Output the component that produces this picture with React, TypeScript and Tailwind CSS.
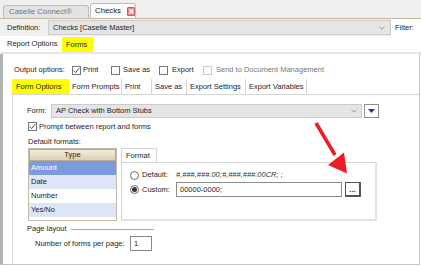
import React from 'react';

function Check({ checked = false, disabled = false }: { checked?: boolean; disabled?: boolean }) {
  return (
    <span
      className={`w-[9px] h-[9px] shrink-0 border bg-white flex items-center justify-center ${
        disabled ? 'border-[#c9c9c9]' : 'border-[#767676]'
      }`}
    >
      {checked && (
        <svg width="7" height="7" viewBox="0 0 7 7">
          <path d="M0.6 3.4 L2.6 5.6 L6.4 0.9" fill="none" stroke="#3a3a3a" strokeWidth="0.9" />
        </svg>
      )}
    </span>
  );
}

function Radio({ checked = false }: { checked?: boolean }) {
  return (
    <span className="w-[9px] h-[9px] shrink-0 rounded-full border border-[#6c6c6c] bg-white flex items-center justify-center">
      {checked && <span className="w-[5px] h-[5px] rounded-full bg-[#333]" />}
    </span>
  );
}

function Chevron() {
  return (
    <svg width="6" height="4" viewBox="0 0 6 4">
      <path d="M0.5 0.8 L3 3.2 L5.5 0.8" fill="none" stroke="#8a8a8a" strokeWidth="0.9" />
    </svg>
  );
}

export default function App() {
  const tabs = [
    { name: 'Form Prompts', w: 'w-[53px]' },
    { name: 'Print', w: 'w-[30px]' },
    { name: 'Save as', w: 'w-[35px]' },
    { name: 'Export Settings', w: 'w-[59px]' },
    { name: 'Export Variables', w: 'w-[61px]' },
  ];

  const rows = [
    { name: 'Amount', cls: 'bg-[#7d9ade] text-white' },
    { name: 'Date', cls: 'bg-[#dde6f6]' },
    { name: 'Number', cls: 'bg-white' },
    { name: 'Yes/No', cls: 'bg-[#dde6f6]' },
  ];

  return (
    <div className="relative w-[421px] h-[266px] overflow-hidden bg-white flex flex-col whitespace-nowrap text-[7.5px] leading-none text-[#1e1e1e] font-['Liberation_Sans',Arial,sans-serif]">
      {/* Document tabs */}
      <div className="h-[19px] shrink-0 flex items-end gap-[1px] pl-[3px] bg-[#efefef] border-b border-[#c7b7a3]">
        <div className="h-[13px] w-[86px] flex items-center pl-[5px] rounded-t-[3px] border border-b-0 border-[#bdbdbd] bg-[#e3e3e3] text-[#777] text-[7.8px]">
          Caselle Connect®
        </div>
        <div className="h-[15px] w-[46px] flex items-center pl-[4px] gap-[6px] rounded-t-[3px] border border-b-0 border-[#bdbdbd] bg-[#fbfbfb] text-[7.8px]">
          <span>Checks</span>
          <span className="w-[9px] h-[9px] rounded-[1px] border border-[#cf5a5a] bg-[#f08a8a] flex items-center justify-center">
            <svg width="5" height="5" viewBox="0 0 5 5">
              <path d="M0.5 0.5 L4.5 4.5 M4.5 0.5 L0.5 4.5" stroke="#fff" strokeWidth="1.2" />
            </svg>
          </span>
        </div>
      </div>

      {/* Definition */}
      <div className="h-[17px] shrink-0 flex items-center bg-[#f0f0f0]">
        <span className="w-[48px] pl-[7px]">Definition:</span>
        <div className="w-[343px] h-[15px] flex items-center justify-between pl-[4px] pr-[5px] border border-[#cbcbcb] bg-[#e5e5e5]">
          <span>Checks [Caselle Master]</span>
          <Chevron />
        </div>
        <div className="flex-1 h-full flex items-center pl-[4px] bg-white">Filter:</div>
      </div>

      {/* Report / Forms */}
      <div className="h-[16px] shrink-0 flex items-end bg-white">
        <span className="w-[62px] pl-[7px] self-center">Report Options</span>
        <div className="h-[15px] w-[31px] flex items-center pl-[4px] bg-[#ffff00]">Forms</div>
      </div>
      <div className="h-[2px] shrink-0 bg-[#e6e6e6]" />

      {/* Main panel */}
      <div className="h-[211px] shrink-0 mr-[1px] flex flex-col bg-white border-l-[3px] border-l-[#b3b3b3] border-r border-r-[#c6c6c6] border-b border-b-[#c6c6c6]">
        {/* Output options */}
        <div className="mt-[10px] h-[12px] flex items-center pl-[11px]">
          <span className="w-[58px]">Output options:</span>
          <div className="w-[39px] flex items-center gap-[2px]">
            <Check checked />
            <span>Print</span>
          </div>
          <div className="w-[48px] flex items-center gap-[3px]">
            <Check />
            <span>Save as</span>
          </div>
          <div className="w-[44px] flex items-center gap-[4px]">
            <Check />
            <span>Export</span>
          </div>
          <div className="flex items-center gap-[4px] text-[#777]">
            <Check disabled />
            <span>Send to Document Management</span>
          </div>
        </div>

        {/* Sub tabs */}
        <div className="mt-[3px] ml-[9px] h-[16px] flex border-b border-[#d6d6d6]">
          <div className="w-[57px] h-[15px] flex items-center pl-[4px] bg-[#ffff00]">Form Options</div>
          {tabs.map((t) => (
            <div key={t.name} className={`${t.w} h-[15px] flex items-center pl-[3px] border-r border-[#d6d6d6]`}>
              {t.name}
            </div>
          ))}
        </div>

        {/* Form Options page */}
        <div className="ml-[9px] flex-1 flex flex-col border-l border-[#dadada]">
          <div className="mt-[9px] h-[14px] flex items-center pl-[14px]">
            <span className="w-[24px]">Form:</span>
            <div className="w-[311px] h-[14px] flex items-center justify-between pl-[4px] pr-[4px] border border-[#cbcbcb] bg-[#e5e5e5]">
              <span>AP Check with Bottom Stubs</span>
              <Chevron />
            </div>
            <div className="ml-[2px] w-[15px] h-[14px] flex flex-col items-center justify-center gap-[1px] border border-[#8e8e8e] bg-white">
              <svg width="7" height="4" viewBox="0 0 7 4">
                <path d="M0 0 L7 0 L3.5 4 Z" fill="#1f3c8a" />
              </svg>
            </div>
          </div>

          <div className="mt-[4px] h-[9px] flex items-center gap-[2px] pl-[15px]">
            <Check checked />
            <span>Prompt between report and forms</span>
          </div>

          <div className="mt-[6px] h-[10px] flex items-center pl-[15px]">Default formats:</div>

          <div className="mt-[1px] flex pl-[15px]">
            {/* Type list */}
            <div className="w-[89px] h-[73px] flex flex-col border border-[#c3b9a6] bg-white">
              <div className="h-[12px] flex items-center justify-center border border-[#b9aa8c] bg-gradient-to-b from-[#f4eddd] to-[#dccfb2]">
                Type
              </div>
              {rows.map((r) => (
                <div key={r.name} className={`h-[14px] flex items-center pl-[2px] ${r.cls}`}>
                  {r.name}
                </div>
              ))}
            </div>

            {/* Format panel */}
            <div className="ml-[4px] flex flex-col">
              <div className="w-[36px] h-[14px] flex items-center pl-[4px] border border-b-0 border-[#d2d2d2] bg-white">
                Format
              </div>
              <div className="w-[256px] h-[59px] flex flex-col pl-[8px] border border-[#d4d4d4] border-r-2 border-b-2 border-r-[#e2e2e2] border-b-[#e2e2e2]">
                <div className="mt-[7px] h-[10px] flex items-center">
                  <Radio />
                  <span className="ml-[3px] w-[34px]">Default:</span>
                  <span className="text-[#333] italic">#,###,###.00;#,###,###.00CR; ;</span>
                </div>
                <div className="mt-[2px] h-[15px] flex items-center">
                  <Radio checked />
                  <span className="ml-[3px] w-[34px]">Custom:</span>
                  <div className="w-[166px] h-[15px] flex items-center pl-[3px] border border-[#8c8c8c] bg-white">
                    00000-0000;
                  </div>
                  <div className="ml-[3px] w-[16px] h-[15px] flex items-end justify-center pb-[2px] border border-[#555] border-r-2 border-b-2 bg-white font-bold">
                    ...
                  </div>
                </div>
              </div>
            </div>
          </div>

          {/* Page layout */}
          <div className="mt-[3px] h-[10px] flex items-center pl-[14px]">
            <span>Page layout</span>
            <span className="ml-[4px] w-[83px] h-px bg-[#a5a5a5]" />
          </div>
          <div className="mt-[2px] h-[15px] flex items-center pl-[22px]">
            <span className="w-[95px]">Number of forms per page:</span>
            <div className="w-[22px] h-[15px] flex items-center pl-[3px] border border-[#8a8a8a] bg-white">1</div>
          </div>
        </div>
      </div>

      {/* Callout arrow */}
      <svg className="absolute left-0 top-0 pointer-events-none" width="421" height="266" viewBox="0 0 421 266">
        <line x1="316" y1="123" x2="335" y2="155" stroke="#ee1c24" strokeWidth="3.5" />
        <path d="M328 165 L344 152.5 L347 173.5 Z" fill="#ee1c24" />
      </svg>
    </div>
  );
}
